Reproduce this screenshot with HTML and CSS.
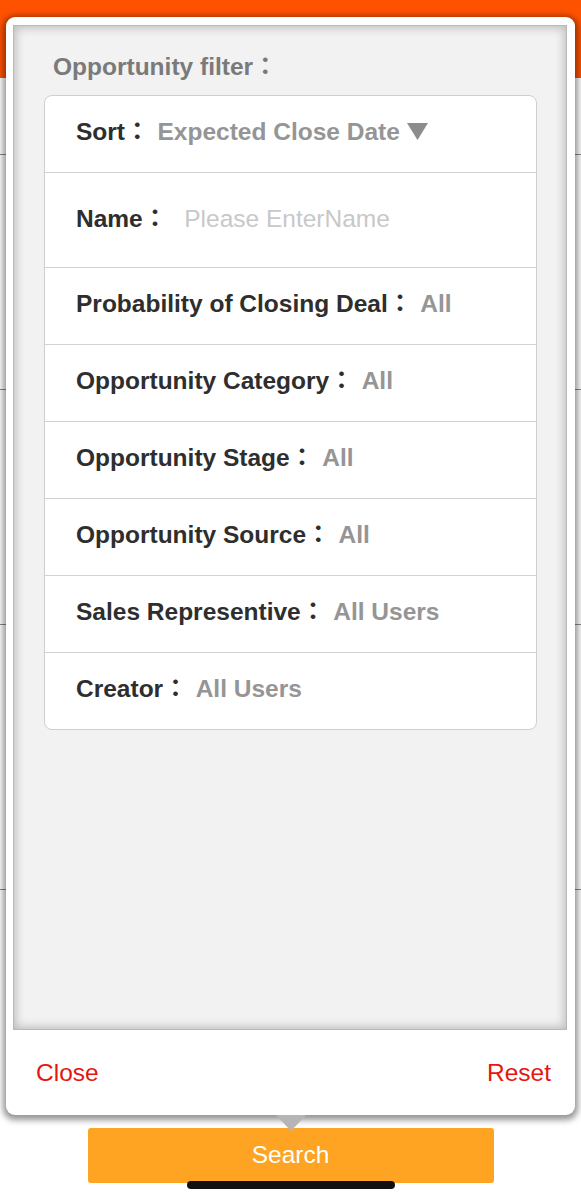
FILE: index.html
```html
<!DOCTYPE html>
<html>
<head>
<meta charset="utf-8">
<link rel="stylesheet" href="styles.css">
</head>
<body>
<div class="page">
  <div class="header"></div>
  <div class="list">
    <div class="list-row r1"></div>
    <div class="list-row r2"></div>
    <div class="list-row r3"></div>
    <div class="list-row r4"></div>
  </div>
</div>
<div class="overlay">
  <div class="popup">
    <div class="panel">
      <div class="title">Opportunity filter<span class="colon">：</span></div>
      <div class="card">
        <div class="row">
          <span class="label">Sort<span class="colon">：</span></span><span class="value">Expected Close Date</span><svg class="caret" width="23" height="19" viewBox="0 0 23 19"><path d="M1 1 H22 L11.5 18 Z" fill="#8c8c8c"/></svg>
        </div>
        <div class="row tall">
          <span class="label">Name<span class="colon">：</span></span><span class="placeholder">Please EnterName</span>
        </div>
        <div class="row"><span class="label">Probability of Closing Deal<span class="colon">：</span></span><span class="value">All</span></div>
        <div class="row"><span class="label">Opportunity Category<span class="colon">：</span></span><span class="value">All</span></div>
        <div class="row"><span class="label">Opportunity Stage<span class="colon">：</span></span><span class="value">All</span></div>
        <div class="row"><span class="label">Opportunity Source<span class="colon">：</span></span><span class="value">All</span></div>
        <div class="row"><span class="label">Sales Representive<span class="colon">：</span></span><span class="value">All Users</span></div>
        <div class="row last"><span class="label">Creator<span class="colon">：</span></span><span class="value">All Users</span></div>
      </div>
    </div>
    <div class="footer">
      <span class="action">Close</span>
      <span class="action">Reset</span>
    </div>
    <div class="arrow"></div>
  </div>
  <div class="search">Search</div>
  <div class="home"></div>
</div>
</body>
</html>
```
FILE: styles.css
```css
* { box-sizing: border-box; }
html, body { margin: 0; padding: 0; }
body {
  width: 581px;
  height: 1201px;
  overflow: hidden;
  position: relative;
  background: #ffffff;
  font-family: "Liberation Sans", Arial, "Noto Sans CJK TC", sans-serif;
}
.page { display: flex; flex-direction: column; }
.header { height: 78px; background: #ff5200; }
.list { display: flex; flex-direction: column; }
.list-row { border-bottom: 1px solid #8a8a8a; }
.r1 { height: 77px; }
.r2 { height: 235px; }
.r3 { height: 235px; }
.r4 { height: 265px; }

.overlay {
  position: absolute;
  left: 0; top: 0; right: 0; bottom: 0;
  display: flex;
  flex-direction: column;
  align-items: center;
}
.popup {
  position: relative;
  margin-top: 17px;
  width: 569px;
  height: 1098px;
  background: #ffffff;
  border-radius: 9px;
  box-shadow: 0 2px 6px 3px rgba(0,0,0,0.42);
  padding: 8px 8px 0 7px;
  display: flex;
  flex-direction: column;
}
.panel {
  height: 1005px;
  background: #f2f2f2;
  border: 1px solid #b9b9b9;
  box-shadow: inset 0 0 10px 2px rgba(0,0,0,0.22);
  padding: 24px 29px 0 30px;
  display: flex;
  flex-direction: column;
}
.colon {
  font-family: "Noto Sans CJK TC", "Noto Sans CJK JP", sans-serif;
  font-weight: bold;
  line-height: 1;
}
.title {
  font-size: 24.5px;
  font-weight: bold;
  color: #7a7a7a;
  height: 36px;
  line-height: 34px;
  padding-left: 9px;
}
.card {
  margin-top: 9px;
  background: #ffffff;
  border: 1px solid #cfcfcf;
  border-radius: 8px;
  display: flex;
  flex-direction: column;
}
.row {
  height: 77px;
  line-height: 72px;
  border-bottom: 1px solid #d2d2d2;
  padding-left: 31px;
  font-size: 24.5px;
  font-weight: bold;
  white-space: nowrap;
}
.row.tall { height: 95px; line-height: 92px; }
.row.last { border-bottom: none; height: 76px; }
.label { color: #2e2e2e; margin-right: 8px; }
.value { color: #959595; }
.caret { margin-left: 6px; vertical-align: -1px; }
.placeholder {
  color: #c8c8c8;
  font-weight: normal;
  margin-left: 9px;
}
.footer {
  flex: 1;
  display: flex;
  align-items: center;
  justify-content: space-between;
  padding: 0 16px 0 23px;
}
.action {
  color: #e8150f;
  font-size: 24.5px;
}
.arrow {
  position: absolute;
  left: 270px;
  bottom: -16px;
  width: 0; height: 0;
  border-left: 15px solid transparent;
  border-right: 15px solid transparent;
  border-top: 16px solid #b5b5b5;
}
.search {
  margin-top: 13px;
  width: 406px;
  height: 55px;
  background: #fea322;
  border-radius: 3px;
  color: #ffffff;
  font-size: 24.5px;
  display: flex;
  align-items: center;
  justify-content: center;
  padding-bottom: 2px;
}
.home {
  margin-top: -2px;
  width: 208px;
  height: 8px;
  border-radius: 4px;
  background: #111111;
}
```
